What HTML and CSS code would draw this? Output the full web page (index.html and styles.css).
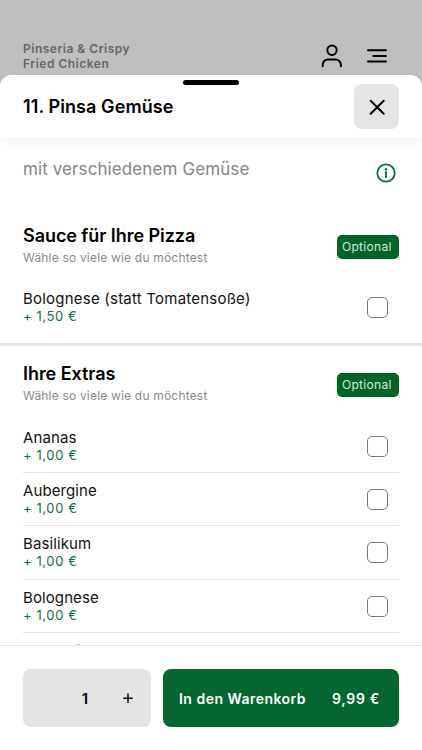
FILE: index.html
```html
<!DOCTYPE html>
<html lang="de">
<head>
<meta charset="utf-8">
<title>Pinsa Gemüse</title>
<link rel="stylesheet" href="styles.css">
</head>
<body>
<div class="app">
  <header class="topbar">
    <div class="brand">Pinseria &amp; Crispy<br>Fried Chicken</div>
    <div class="topicons">
      <svg width="24" height="26" viewBox="0 0 24 26"><circle cx="12" cy="7.3" r="4.7"/><path d="M2.7 23.3v-1.6a5.3 5.3 0 0 1 5.3-5.3h7.6a5.3 5.3 0 0 1 5.3 5.3v1.6"/></svg>
      <svg width="22" height="26" viewBox="0 0 22 26"><path d="M2 7.3h18M7.3 13h12.7M2 18.6h18"/></svg>
    </div>
  </header>
  <main class="sheet">
    <div class="head">
      <span class="handle"></span>
      <h1><span>11. Pinsa Gemüse</span></h1>
      <button class="close" aria-label="Schließen"><svg width="20" height="20" viewBox="0 0 20 20"><path d="M3.7 3.7l13 13M16.7 3.7l-13 13"/></svg></button>
    </div>
    <div class="content">
      <div class="desc">
        <p>mit verschiedenem Gemüse</p>
        <svg width="20" height="20" viewBox="0 0 20 20"><circle cx="10" cy="10" r="8.7"/><path d="M10 9v5.2"/><circle class="dot" cx="10" cy="6.2" r="1.2"/></svg>
      </div>
      <section class="group sauce">
        <div class="grouphead"><div><h2>Sauce für Ihre Pizza</h2><p class="hint">Wähle so viele wie du möchtest</p></div><span class="tag">Optional</span></div>
        <div class="row"><div><p class="name wide">Bolognese (statt Tomatensoße)</p><p class="price">+ 1,50 €</p></div><i class="box"></i></div>
      </section>
      <section class="group extras">
        <div class="grouphead"><div><h2>Ihre Extras</h2><p class="hint">Wähle so viele wie du möchtest</p></div><span class="tag">Optional</span></div>
        <div class="row"><div><p class="name">Ananas</p><p class="price">+ 1,00 €</p></div><i class="box"></i></div>
        <div class="row"><div><p class="name">Aubergine</p><p class="price">+ 1,00 €</p></div><i class="box"></i></div>
        <div class="row"><div><p class="name">Basilikum</p><p class="price">+ 1,00 €</p></div><i class="box"></i></div>
        <div class="row"><div><p class="name">Bolognese</p><p class="price">+ 1,00 €</p></div><i class="box"></i></div>
        <div class="row faded"><div><p class="name">Brokkoli</p></div></div>
      </section>
    </div>
    <footer class="foot">
      <div class="qty"><span></span><b>1</b><svg width="12" height="12" viewBox="0 0 12 12"><path d="M6 2v8.4M1.8 6.2h8.4"/></svg></div>
      <button class="cart"><span>In den Warenkorb</span><span class="total">9,99 €</span></button>
    </footer>
  </main>
</div>
</body>
</html>
```
FILE: styles.css
```css
* { box-sizing: border-box; margin: 0; padding: 0; }
body { font-family: Inter, "Liberation Sans", sans-serif; color: #000; background: #bfbfbf; }
button { border: 0; font: inherit; }
svg { fill: none; stroke: #000; stroke-width: 2; stroke-linecap: round; stroke-linejoin: round; display: block; }
.app { width: 422px; height: 750px; overflow: hidden; display: flex; flex-direction: column; }
.topbar { height: 75px; flex: none; padding: 41px 34px 0 23px; display: flex; justify-content: space-between; align-items: flex-start; }
.brand { font-size: 12px; line-height: 15px; font-weight: 600; letter-spacing: .5px; color: #666; }
.topicons { display: flex; gap: 22px; padding-top: 2px; }
.sheet { flex: 1; min-height: 0; background: #fff; border-radius: 12px 12px 0 0; display: flex; flex-direction: column; }
.head { position: relative; z-index: 1; height: 63px; flex: none; padding: 0 23px; display: flex; justify-content: space-between; align-items: center; background: #fff; border-radius: 12px 12px 0 0; box-shadow: 0 3px 10px rgba(0,0,0,.06); clip-path: inset(0 0 -16px 0); }
.handle { position: absolute; left: 183px; top: 5px; width: 56px; height: 5px; border-radius: 3px; background: #000; }
h1 { font-size: 18px; line-height: 24px; font-weight: 600; letter-spacing: .09px; }
.close { width: 45px; height: 45px; border-radius: 8px; background: #e5e5e5; display: flex; align-items: center; justify-content: center; }
.content { flex: 1; min-height: 0; overflow: hidden; }
.desc { height: 73px; padding: 19px 26px 0 23px; display: flex; justify-content: space-between; align-items: flex-start; }
.desc p { font-size: 17px; line-height: 25px; letter-spacing: .1px; color: #858585; }
.desc svg { stroke: #066b36; stroke-width: 1.8; margin-top: 5.5px; }
.desc .dot { fill: #066b36; stroke: none; }
.group { padding: 0 23px; }
.grouphead { height: 74px; padding-top: 13px; display: flex; justify-content: space-between; align-items: flex-start; }
h2 { font-size: 18px; line-height: 24px; font-weight: 600; letter-spacing: -.06px; }
.hint { font-size: 12px; line-height: 18px; letter-spacing: .19px; color: #8a8a8a; margin-top: 1px; }
.tag { height: 24px; width: 62px; margin-top: 11.4px; padding-left: 5px; border-radius: 5px; background: #006429; color: #d9eadf; font-size: 12px; line-height: 24px; letter-spacing: .3px; }
.row { height: 53.33px; padding: 9px 11px 0 0; display: flex; justify-content: space-between; align-items: flex-start; border-bottom: 1px solid #e2e2e2; }
.sauce .row { height: 57.6px; padding-top: 5px; border: 0; }
.sauce .box { margin-top: 7px; }
.extras { border-top: 3px solid #e3e3e3; }
.extras .grouphead { padding-top: 16.5px; }
.name { font-size: 15px; line-height: 18px; letter-spacing: .1px; color: #111; }
.wide { letter-spacing: .22px; }
.price { font-size: 13px; line-height: 17px; letter-spacing: .6px; color: #0b7340; }
.box { width: 21px; height: 21px; margin-top: 7px; border: 1px solid #777; border-radius: 5px; }
.faded { opacity: .4; }
.foot { height: 105px; flex: none; border-top: 1px solid #e2e2e2; padding: 23px 23px 0; display: flex; gap: 12px; background: #fff; }
.qty { width: 128px; height: 58px; border-radius: 8px; background: #e4e4e4; display: grid; grid-template-columns: 46px 32px 1fr; align-items: center; font-size: 15px; }
.qty b { font-weight: 600; text-align: center; }
.qty svg { stroke-width: 1.4; margin-left: 21px; }
.cart { flex: 1; height: 58px; border-radius: 8px; background: #056631; color: #fff; font-size: 14px; font-weight: 600; letter-spacing: .48px; padding: 0 19px 0 16px; display: flex; justify-content: space-between; align-items: center; }
.total { letter-spacing: .7px; }
```
